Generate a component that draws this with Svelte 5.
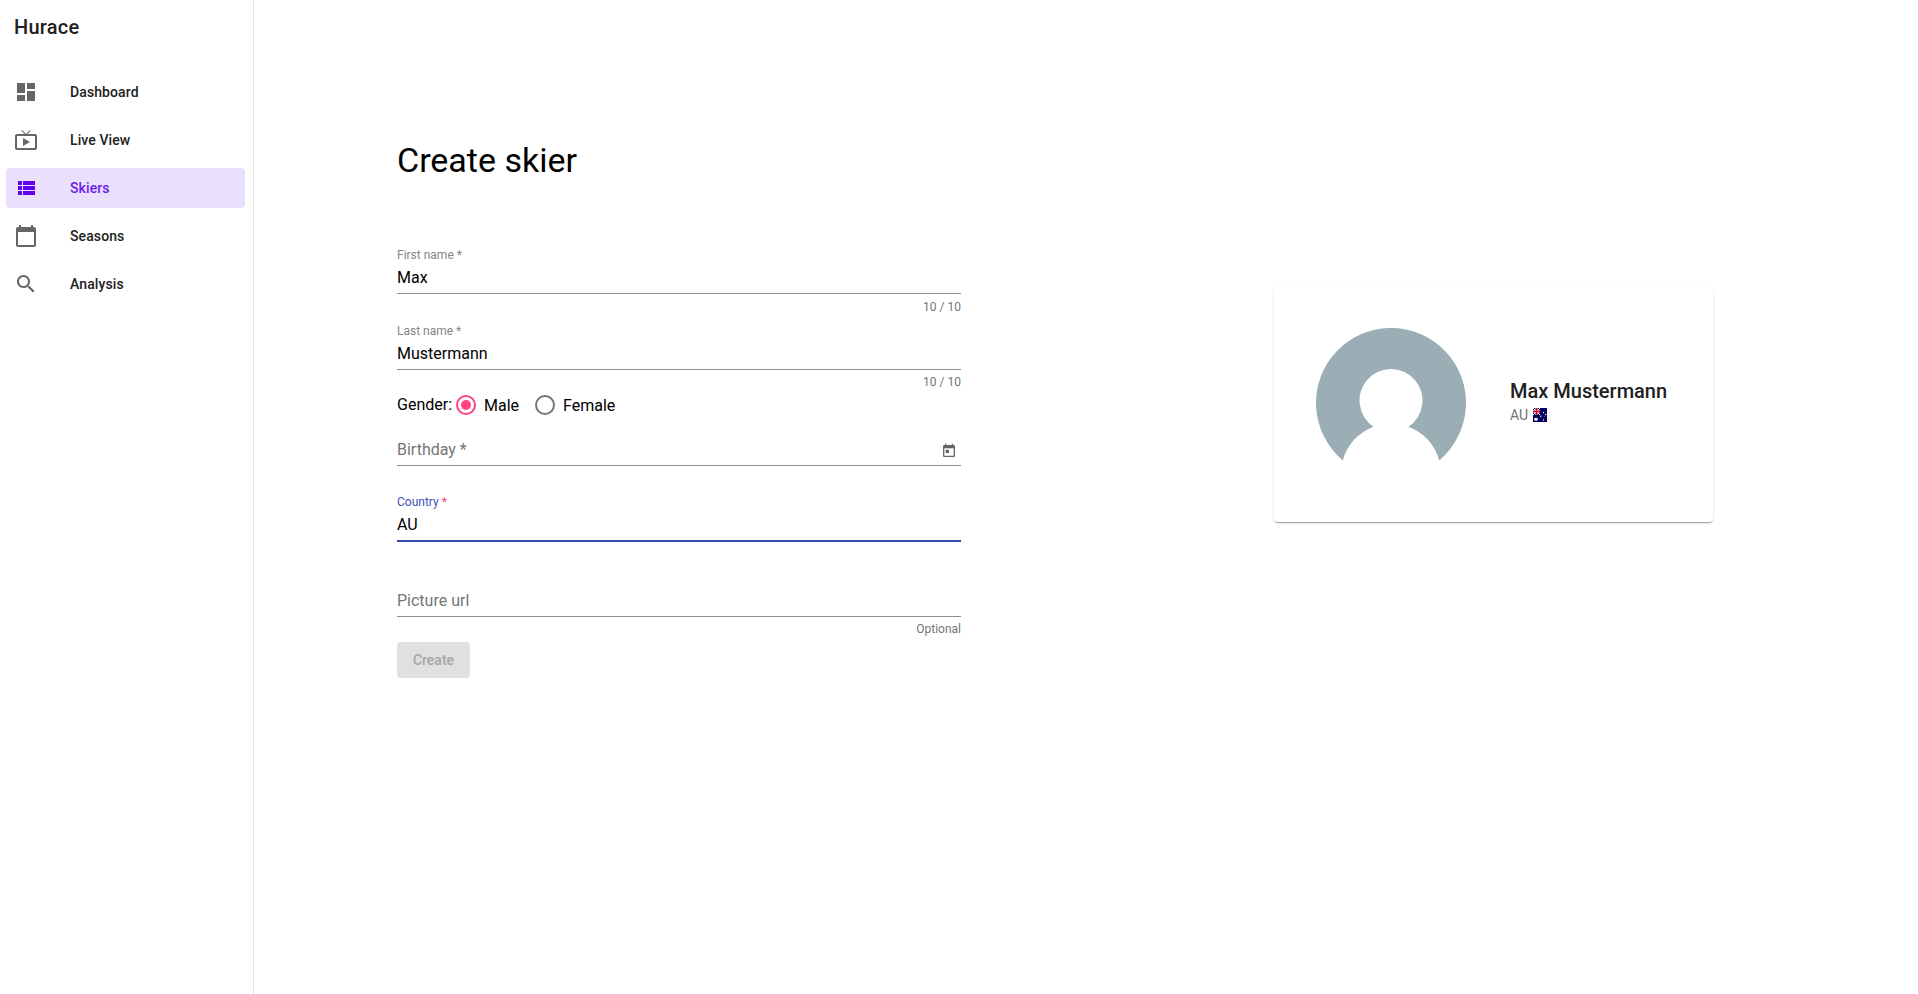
<script>
  const nav = [
    { label: 'Dashboard', icon: 'M3 13h8V3H3v10zm0 8h8v-6H3v6zm10 0h8V11h-8v10zm0-18v6h8V3h-8z' },
    { label: 'Live View', icon: 'M21 6h-7.59l3.29-3.29L16 2l-4 4-4-4-.7.71L10.59 6H3c-1.1 0-2 .89-2 2v12c0 1.1.9 2 2 2h18c1.1 0 2-.9 2-2V8c0-1.11-.9-2-2-2zm0 14H3V8h18v12zM9 10v8l7-4z' },
    { label: 'Skiers', icon: 'M4 14h4v-4H4v4zm0 5h4v-4H4v4zM4 9h4V5H4v4zm5 5h12v-4H9v4zm0 5h12v-4H9v4zM9 5v4h12V5H9z' },
    { label: 'Seasons', icon: 'M20 3h-1V1h-2v2H7V1H5v2H4c-1.1 0-2 .9-2 2v16c0 1.1.9 2 2 2h16c1.1 0 2-.9 2-2V5c0-1.1-.9-2-2-2zm0 18H4V8h16v13z' },
    { label: 'Analysis', icon: 'M15.5 14h-.79l-.28-.27C15.41 12.59 16 11.11 16 9.5 16 5.91 13.09 3 9.5 3S3 5.91 3 9.5 5.91 16 9.5 16c1.61 0 3.09-.59 4.23-1.57l.27.28v.79l5 4.99L20.49 19l-4.99-5zm-6 0C7.01 14 5 11.99 5 9.5S7.01 5 9.5 5 14 7.01 14 9.5 11.99 14 9.5 14z' }
  ];
  let active = $state('Skiers');
  let gender = $state('Male');
  let firstName = $state('Max');
  let lastName = $state('Mustermann');
  let country = $state('AU');
</script>

<div class="app">
  <aside>
    <div class="brand">Hurace</div>
    <nav>
      {#each nav as item}
        <button class="item" class:active={active === item.label} onclick={() => (active = item.label)}>
          <svg viewBox="0 0 24 24" width="24" height="24"><path d={item.icon} /></svg>
          <span>{item.label}</span>
        </button>
      {/each}
    </nav>
  </aside>

  <main>
    <section class="form">
      <h1>Create skier</h1>

      <div class="field first">
        <label for="first">First name *</label>
        <div class="control"><input id="first" bind:value={firstName} /></div>
        <div class="hint">10 / 10</div>
      </div>

      <div class="field last">
        <label for="last">Last name *</label>
        <div class="control"><input id="last" bind:value={lastName} /></div>
        <div class="hint tight">10 / 10</div>
      </div>

      <div class="gender">
        <span class="caption">Gender:</span>
        {#each ['Male', 'Female'] as option}
          <button class="radio" onclick={() => (gender = option)}>
            <span class="ring" class:checked={gender === option}></span>
            <span class="option">{option}</span>
          </button>
        {/each}
      </div>

      <div class="field birthday">
        <label for="birthday"></label>
        <div class="control">
          <input id="birthday" placeholder="Birthday *" />
          <svg class="today" viewBox="0 0 24 24" width="16" height="16">
            <path d="M19 3h-1V1h-2v2H8V1H6v2H5c-1.11 0-1.99.9-1.99 2L3 19c0 1.1.89 2 2 2h14c1.1 0 2-.9 2-2V5c0-1.1-.9-2-2-2zm0 16H5V8h14v11zM7 10h5v5H7z" />
          </svg>
        </div>
      </div>

      <div class="field country">
        <label for="country">Country <span>*</span></label>
        <div class="control"><input id="country" bind:value={country} /></div>
      </div>

      <div class="field picture">
        <label for="picture"></label>
        <div class="control"><input id="picture" placeholder="Picture url" /></div>
        <div class="hint tight">Optional</div>
      </div>

      <button class="create" disabled>Create</button>
    </section>

    <section class="card">
      <svg class="avatar" viewBox="0 0 150 150" width="150" height="150">
        <path d="M26.8 132.4A75 75 0 1 1 123.2 132.4A49.9 49.9 0 0 0 92.5 98.7A31.5 31.5 0 1 0 57.5 98.7A49.9 49.9 0 0 0 26.8 132.4Z" />
      </svg>
      <div class="info">
        <div class="name">{firstName} {lastName}</div>
        <div class="nation">
          <span>{country}</span>
          <svg viewBox="0 0 14 14" width="14" height="14">
            <path fill="#00005f" d="M0 0h14v14H0z" />
            <path stroke="#fff" stroke-width="1" d="M0 0l7 7M7 0L0 7" />
            <path stroke="#e8a3b4" stroke-width="2.6" d="M3.5 0v7M0 3.5h7" />
            <path stroke="#e00022" stroke-width="1.2" d="M3.5 0v7M0 3.5h7" />
            <g fill="#fff">
              <path d="M3 9.2l.6 1.1 1.4-.3-.6 1.2.9.8-1.3.3-1 1-1-1-1.3-.3.9-.8-.6-1.2 1.4.3z" />
              <circle cx="10.5" cy="4.5" r=".7" /><circle cx="7.8" cy="8.3" r=".7" />
              <circle cx="12.7" cy="6.5" r=".7" /><circle cx="11.2" cy="8.7" r=".4" />
              <circle cx="10.5" cy="12" r=".7" />
            </g>
          </svg>
        </div>
      </div>
    </section>
  </main>
</div>

<style>
  :global(body) { margin: 0; background: #fff; }
  .app { display: flex; height: 994px; font: 16px/24px Roboto, sans-serif; color: #000; overflow: hidden; }
  button, input { font: inherit; color: inherit; border: 0; background: none; padding: 0; margin: 0; }
  aside { box-sizing: border-box; width: 254px; border-right: 1px solid #e0e0e0; flex: none; }
  .brand { padding: 11px 14px 29px; font-size: 20px; line-height: 32px; font-weight: 500; letter-spacing: .25px; color: #212121; }
  nav { display: flex; flex-direction: column; gap: 8px; padding: 0 8px 0 6px; }
  .item { display: flex; align-items: center; gap: 32px; height: 40px; padding: 0 8px; border-radius: 4px; font-size: 14px; font-weight: 500; letter-spacing: .1px; color: #212121; text-align: left; }
  .item svg { fill: #666; }
  .item.active { background: #eadffc; color: #6c1bee; }
  .item.active svg { fill: #6200ee; }
  main { flex: 1; display: flex; align-items: flex-start; padding: 140px 205px 0 143px; justify-content: space-between; }
  .form { width: 564px; }
  h1 { margin: 0 0 67px; font-size: 34px; line-height: 40px; font-weight: 400; }
  .field { height: 76px; }
  .field.last, .field.picture { height: 72px; }
  .field.birthday { height: 75px; }
  label { display: block; height: 16px; margin-bottom: 2px; font-size: 12px; line-height: 16px; color: #858585; }
  .control { display: flex; height: 28px; border-bottom: 1px solid #8f8f8f; }
  input { flex: 1; min-width: 0; height: 24px; margin-top: 1px; line-height: 24px; outline: 0; }
  input::placeholder { color: #757575; opacity: 1; }
  .country label { color: #3f51b5; }
  .country label span { color: #ff4081; }
  .country .control { border-bottom: 2px solid #3949ab; }
  .hint { margin-top: 6px; font-size: 12px; line-height: 14px; color: #757575; text-align: right; }
  .hint.tight { margin-top: 5px; }
  .today { fill: #666; margin: 6px 4px 0 0; }
  .gender { display: flex; height: 20px; margin-bottom: 4px; align-items: flex-start; }
  .caption { width: 59px; line-height: 20px; }
  .radio { display: flex; align-items: flex-start; gap: 8px; height: 20px; margin-right: 16px; line-height: 20px; }
  .option { padding-top: 1px; }
  .ring { box-sizing: border-box; width: 20px; height: 20px; border: 2px solid #757575; border-radius: 50%; display: grid; place-items: center; }
  .ring.checked { border-color: #ff4081; }
  .ring.checked::after { content: ''; width: 10px; height: 10px; border-radius: 50%; background: #ff4081; }
  .create { display: block; width: 73px; height: 36px; border-radius: 4px; background: #e0e0e0; color: #a6a6a6; font-size: 14px; font-weight: 500; line-height: 36px; }
  .card { box-sizing: border-box; width: 439px; height: 235px; margin-top: 147px; padding: 41px 42px; display: flex; gap: 44px; border-radius: 4px; box-shadow: 0 2px 1px -1px rgba(0,0,0,.2), 0 1px 1px 0 rgba(0,0,0,.14), 0 1px 3px 0 rgba(0,0,0,.12); }
  .avatar { fill: #9baeb6; flex: none; }
  .info { padding-top: 51px; white-space: nowrap; }
  .name { font-size: 20px; line-height: 24px; font-weight: 500; color: #212121; }
  .nation { display: flex; gap: 5px; align-items: center; font-size: 14px; line-height: 24px; color: #757575; }
</style>
